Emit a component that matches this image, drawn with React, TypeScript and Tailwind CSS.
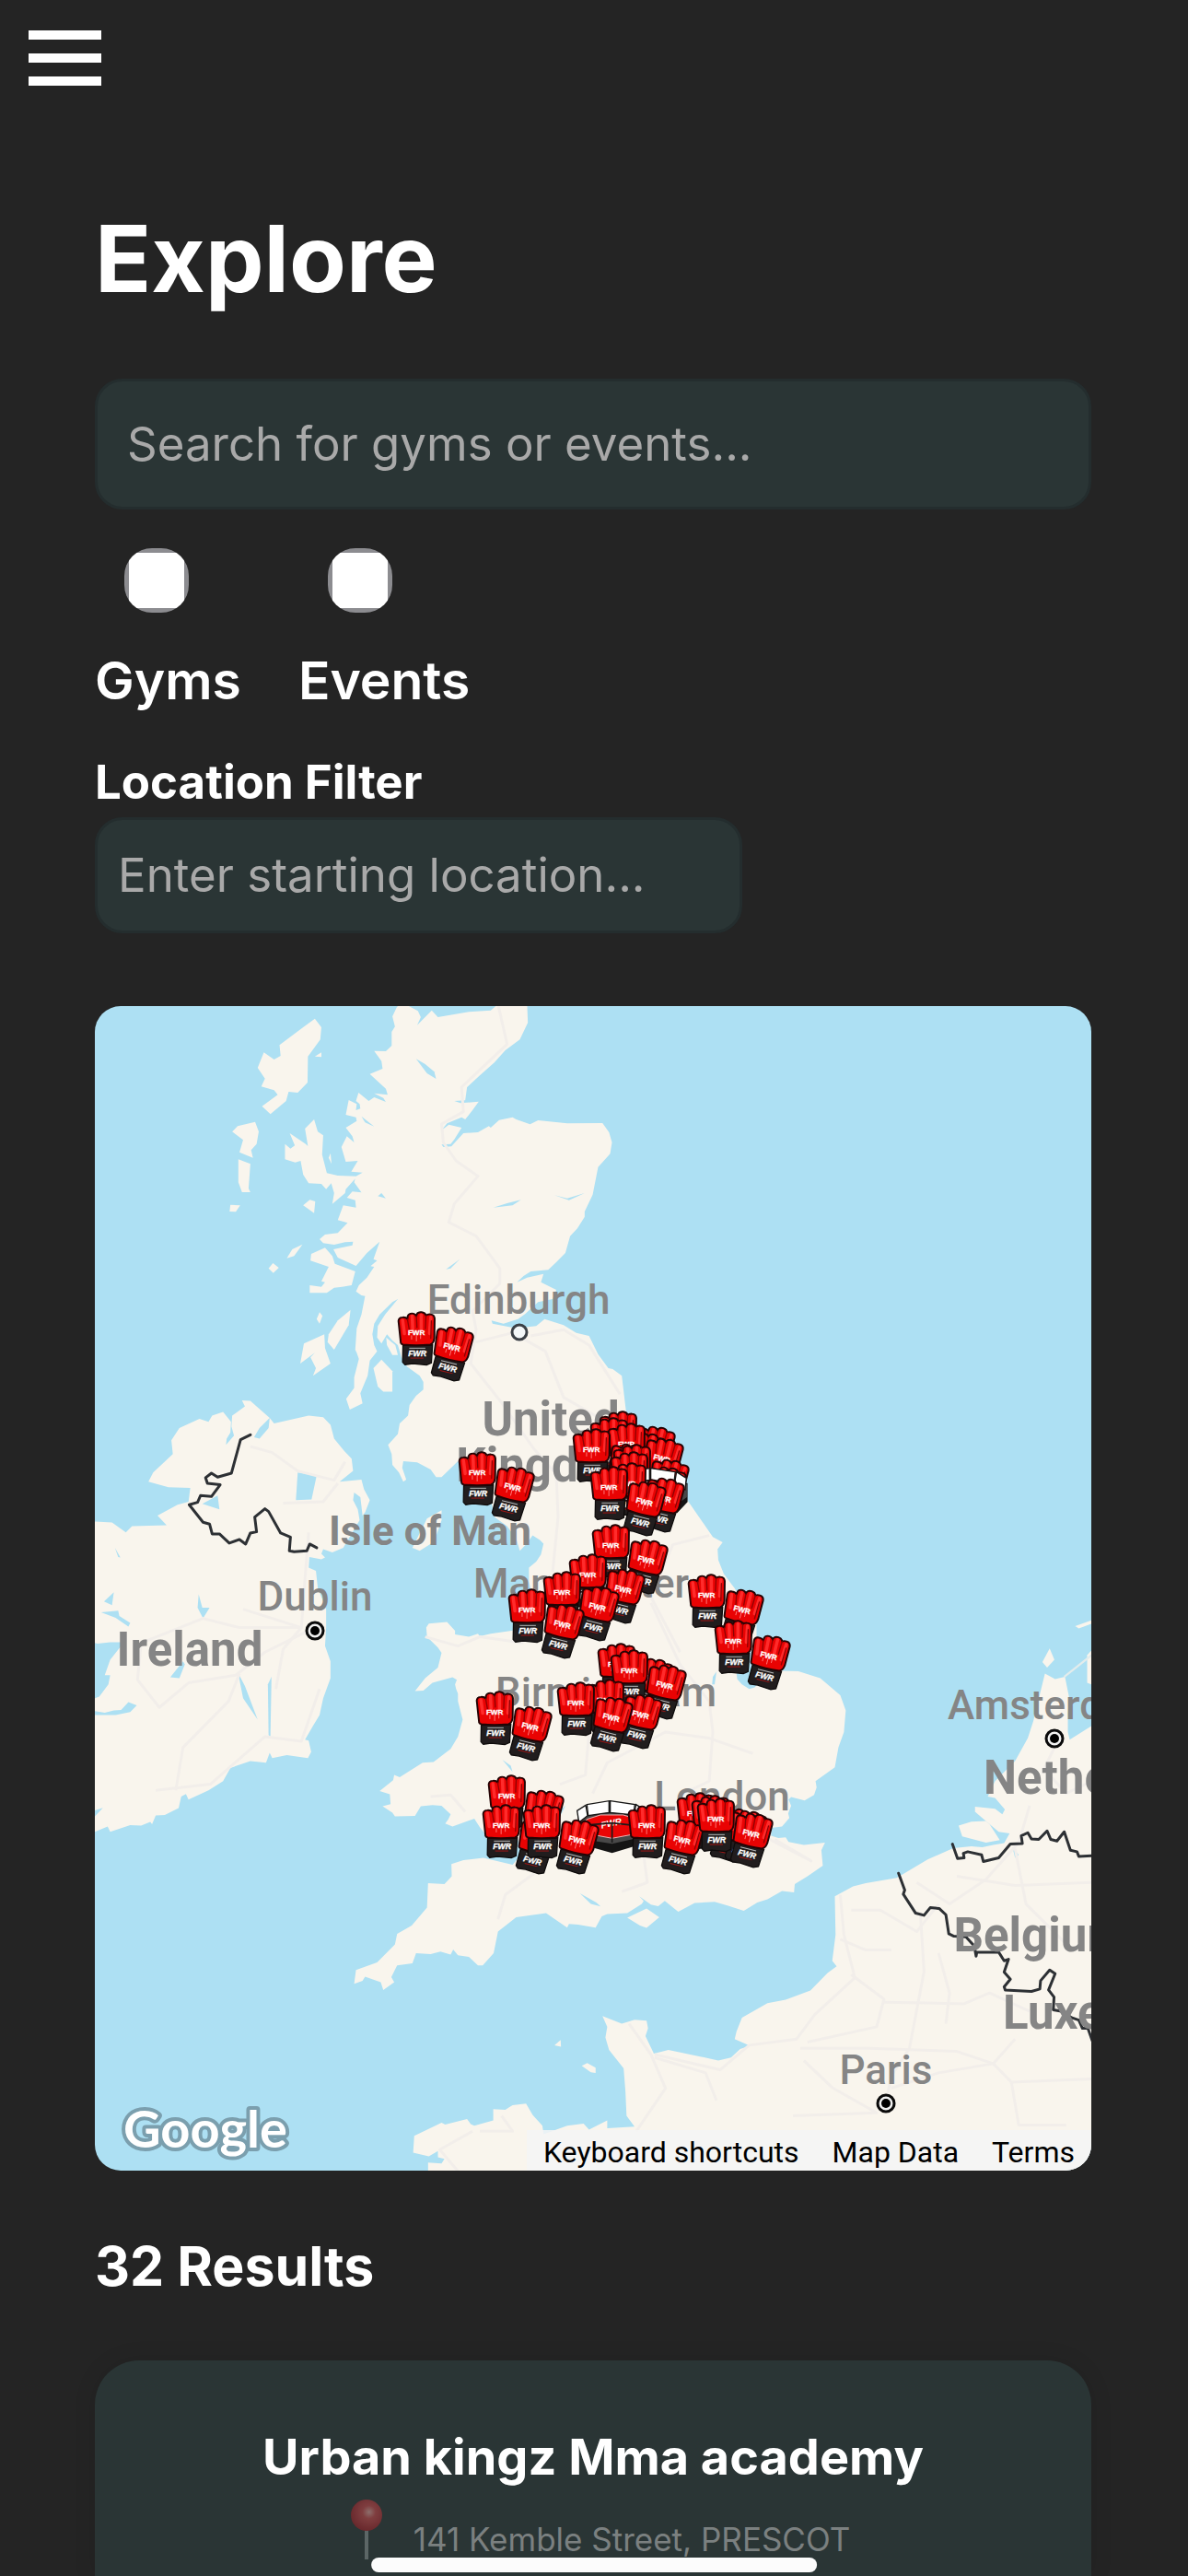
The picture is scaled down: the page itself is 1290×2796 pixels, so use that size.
import React from "react";

const filters = [
	{ id: "gyms", label: "Gyms" },
	{ id: "events", label: "Events" },
];

const mapLinks = ["Map Data", "Terms"];

// Land outlines, drawn on a 2769 x 3828 sheet
const land = [
	// Great Britain
	"870,30 895,36 920,52 928,72 918,98 958,50 975,72 1060,55 1120,50 1140,30 1220,30 1222,90 1200,145 1160,180 1130,220 1090,262 1055,300 1050,343 1020,345 1037,352 1087,347 1070,375 1050,405 1040,398 1000,418 985,440 1005,422 1040,432 1020,470 1010,485 985,487 990,495 1012,493 1045,450 1085,447 1115,427 1120,432 1143,407 1180,398 1190,405 1228,421 1250,408 1330,418 1427,417 1445,447 1453,480 1448,517 1415,560 1400,650 1378,705 1378,722 1358,760 1338,785 1325,840 1300,870 1278,895 1230,900 1210,915 1192,935 1220,920 1265,908 1258,935 1300,960 1290,990 1250,1000 1215,1038 1195,1055 1155,1070 1122,1060 1125,1070 1190,1085 1245,1078 1268,1055 1320,1075 1355,1100 1390,1110 1415,1170 1443,1215 1455,1218 1480,1240 1490,1340 1500,1440 1580,1560 1660,1645 1730,1765 1757,1782 1743,1805 1745,1840 1760,1885 1790,1932 1850,2050 1850,2110 1810,2180 1795,2210 1797,2228 1810,2245 1830,2260 1845,2255 1870,2220 1890,2200 1965,2202 2025,2225 2080,2280 2095,2330 2090,2400 2075,2450 2065,2515 2012,2560 2015,2580 2008,2605 1982,2623 1965,2618 1945,2612 1938,2620 1945,2640 1937,2665 1940,2680 1920,2708 1890,2712 1890,2738 1910,2745 1930,2743 1938,2758 1980,2768 2038,2760 2028,2785 2032,2835 1990,2870 1955,2895 1953,2922 1920,2918 1880,2945 1852,2955 1815,2982 1770,2965 1735,2953 1680,2957 1635,2985 1598,2950 1580,2967 1560,2962 1528,2935 1540,2950 1535,2960 1495,2990 1440,2993 1425,3000 1408,3037 1360,3027 1335,3025 1330,3037 1272,2990 1190,3003 1140,3050 1128,3120 1098,3160 1085,3160 1060,3132 1030,3127 1017,3108 1010,3125 982,3115 955,3123 915,3120 905,3153 863,3160 847,3198 855,3215 825,3240 818,3215 775,3197 768,3210 745,3220 750,3175 808,3150 857,3092 863,3057 903,3030 945,2972 948,2892 993,2895 1013,2870 1012,2830 1045,2817 1100,2810 1180,2832 1210,2790 1190,2740 1110,2740 1090,2710 1075,2682 1015,2708 995,2698 1003,2685 1010,2668 985,2640 960,2638 928,2642 912,2673 857,2675 850,2663 823,2642 845,2635 843,2603 815,2592 852,2557 855,2540 870,2547 933,2500 963,2498 1010,2455 1030,2415 1043,2360 1030,2300 1030,2275 1025,2260 1022,2245 1027,2230 1015,2222 960,2240 935,2265 912,2267 940,2225 975,2190 985,2142 975,2125 945,2090 943,2060 950,2047 1000,2042 1022,2070 1022,2082 1060,2090 1085,2080 1090,2088 1120,2080 1190,2068 1240,1990 1225,1910 1225,1865 1245,1845 1258,1822 1265,1787 1255,1775 1235,1760 1220,1785 1200,1810 1190,1770 1165,1730 1130,1700 1120,1640 1115,1560 1110,1510 1135,1495 1180,1472 1130,1500 1100,1505 1060,1520 1035,1525 1030,1518 985,1570 970,1570 955,1545 918,1522 880,1518 877,1540 888,1578 880,1585 868,1555 850,1530 848,1495 838,1465 865,1430 870,1395 893,1370 897,1335 915,1305 935,1285 935,1260 925,1240 890,1210 875,1180 865,1140 850,1125 835,1105 820,1135 808,1115 810,1078 830,1040 865,990 850,1000 815,1040 800,1070 795,1105 800,1140 808,1160 788,1190 782,1240 768,1280 762,1297 768,1330 733,1350 723,1315 745,1280 745,1245 758,1185 752,1165 748,1155 752,1085 765,1040 775,980 765,978 750,965 758,945 780,920 800,885 790,883 808,865 798,860 815,803 780,840 750,882 700,855 688,828 740,815 742,803 720,805 690,813 660,808 650,795 665,780 700,775 727,742 700,733 715,685 750,692 748,668 725,660 740,640 765,643 745,610 748,598 722,632 720,645 685,680 690,645 682,613 668,632 655,615 620,613 605,585 598,540 583,545 555,535 555,485 570,500 582,490 568,450 612,485 618,492 610,435 635,405 645,445 660,457 657,520 670,580 700,588 750,590 768,578 737,575 755,540 722,543 710,495 725,460 745,480 740,460 722,432 752,410 750,398 722,390 730,342 752,355 750,375 762,370 760,355 750,345 757,318 785,345 800,333 832,348 825,335 800,320 837,325 832,305 788,257 823,240 820,215 800,182 832,183 848,165 848,120 857,103 850,70 862,40",
	// Hebrides and the Clyde islands
	"637,77 655,105 652,145 618,200 617,285 590,318 565,315 558,345 515,388 492,362 535,325 525,310 490,298 500,272 480,237 497,187 525,210 543,198 540,163 605,105",
	"655,187 637,200 655,202",
	"473,413 483,445 477,485 462,505 467,530 430,512 440,472 410,445 425,427",
	"427,535 460,550 455,630 460,642 437,642 427,610",
	"405,683 432,685 420,706 403,705",
	"605,685 623,667 638,672 635,710",
	"680,515 683,550 675,530",
	"603,812 580,850 560,857 575,828",
	"522,873 538,888 523,905 510,890",
	"627,843 665,823 685,850 692,875 748,900 738,945 712,950 690,953 670,970 623,970 623,945 655,950 665,935 655,932 675,885 625,865",
	"735,1025 730,1075 690,1155 672,1130 675,1105 700,1060",
	"663,1105 665,1150 680,1200 632,1240 640,1215 625,1180 637,1165 597,1200 607,1135",
	"650,1033 658,1045 650,1070 642,1055",
	"820,1187 850,1225 850,1292 825,1292 810,1275 798,1215",
	"833,1115 858,1140 865,1172 850,1172 835,1140",
	// Isle of Man
	"985,1678 985,1710 965,1780 925,1810 905,1800 945,1705",
	// Ireland
	"437,1320 460,1322 513,1377 525,1395 620,1370 660,1375 680,1400 690,1445 718,1485 738,1510 742,1550 705,1585 765,1578 772,1610 788,1645 775,1685 765,1700 768,1695 762,1635 745,1620 742,1645 755,1675 760,1710 715,1800 685,1815 660,1805 655,1820 665,1832 655,1838 622,1830 620,1865 640,1875 645,1930 668,2000 668,2060 665,2120 680,2170 680,2225 660,2290 650,2345 632,2380 610,2425 620,2428 627,2465 618,2485 560,2475 520,2485 513,2468 503,2500 460,2495 405,2517 385,2560 345,2590 290,2620 283,2602 270,2610 263,2648 225,2670 200,2672 190,2700 185,2693 160,2705 130,2703 75,2725 68,2708 33,2725 0,2730 0,1715 33,1715 80,1718 118,1750 135,1730 230,1727 205,1695 260,1660 290,1650 295,1605 235,1603 180,1585 193,1555 247,1495 243,1450 265,1410 320,1380 345,1390 355,1370 385,1358 407,1390 405,1425 395,1445 393,1465 415,1435 408,1405 410,1370 445,1340",
	// Channel islands and the Isle of Wight
	"1295,3420 1312,3403 1313,3425",
	"1370,3487 1385,3478 1408,3493 1408,3510 1395,3508",
	"1495,3005 1548,2975 1583,3003 1548,3038 1530,3030",
	// France, Belgium and the Netherlands
	"948,3840 948,3802 985,3805 993,3790 975,3785 975,3765 950,3782 907,3770 910,3715 985,3672 995,3678 1055,3660 1065,3677 1075,3682 1127,3665 1127,3628 1160,3630 1180,3615 1217,3610 1235,3647 1262,3682 1265,3710 1330,3682 1375,3675 1390,3695 1440,3665 1440,3690 1515,3685 1493,3650 1490,3570 1485,3495 1445,3435 1435,3395 1440,3360 1427,3325 1480,3350 1515,3337 1548,3340 1552,3365 1545,3390 1565,3440 1568,3447 1608,3435 1680,3453 1745,3470 1780,3460 1805,3432 1832,3422 1790,3400 1795,3375 1810,3330 1880,3283 1930,3272 1998,3242 2045,3185 2070,3163 2058,3145 2067,3060 2065,2935 2115,2903 2150,2892 2235,2875 2320,2815 2390,2778 2440,2772 2470,2775 2500,2768 2530,2762 2545,2730 2515,2725 2485,2695 2450,2660 2450,2643 2505,2650 2525,2668 2532,2652 2505,2615 2485,2610 2505,2560 2560,2495 2595,2420 2610,2365 2642,2210 2670,2228 2697,2220 2708,2285 2705,2340 2705,2400 2710,2425 2770,2380 2790,2380 2790,3840",
	"2405,2705 2440,2692 2480,2690 2490,2700 2518,2752 2480,2760 2415,2740",
	"2655,2128 2668,2165 2648,2190 2635,2172",
	"2725,2055 2780,2032 2780,2043 2735,2063",
	"2780,2120 2758,2150 2758,2240 2780,2250",
];

// Lakes, lochs and inlets cut back out of the land
const water = [
	"915,208 940,225 965,250 970,273 945,255",
	"765,395 800,428 775,415",
	"810,655 820,645 832,662",
	"1127,692 1165,678 1203,667 1180,685",
	"1295,652 1330,662 1378,645 1335,668",
	"997,893 1035,860 1010,890",
	"1152,2490 1175,2510 1180,2530",
	"1730,2220 1740,2203 1735,2245 1728,2245",
	"1365,2925 1410,2955 1422,2968 1395,2960",
	"33,2110 40,2112 75,2108 113,2108 75,2165 60,2215 75,2215 70,2245 45,2285 33,2290",
	"33,2332 60,2337 85,2330 105,2328 125,2303 148,2313 130,2335 90,2345 33,2345",
	"33,2655 55,2647 33,2675",
	"88,1800 103,1832 97,1830",
	"85,1945 80,1987 58,1975",
	"50,2010 97,2005 100,2022 130,2045 125,2057 90,2028",
	"318,1952 328,1995 348,1995 330,2030 315,1995",
	"370,1630 375,1675 328,1657",
	"590,1555 642,1565 628,1643 585,1645",
	"425,2205 445,2250 480,2360 440,2290 430,2230",
	"508,2245 518,2220 515,2415 510,2410",
	"240,2222 275,2170 280,2180 265,2225",
	"513,1377 510,1410 485,1445 470,1440 485,1410",
	"1315,2650 1325,2640 1300,2700",
	"2553,2775 2570,2800 2560,2810",
];

const borders = [
	"460,1432 433,1448 408,1557 370,1570 353,1557 337,1572 342,1590 377,1595 353,1633 323,1630 315,1652 292,1660 330,1717 348,1723 355,1755 375,1755 402,1785 430,1773 447,1788 460,1752 477,1748 472,1700 500,1673 510,1682 543,1752 570,1765 567,1810 580,1813 615,1810 623,1788 642,1800",
	"2388,2765 2402,2812 2420,2810 2418,2795 2430,2790 2468,2800 2473,2822 2515,2810 2547,2765 2580,2763 2577,2738 2595,2728 2605,2748 2625,2750 2648,2722 2658,2750 2675,2755 2695,2725 2712,2785 2730,2790 2735,2805 2775,2803",
	"2240,2860 2257,2915 2253,2928 2287,2990 2310,2997 2327,2972 2352,2975 2370,2995 2378,3057 2392,3065 2425,3067 2448,3097 2453,3130 2455,3117 2515,3117 2530,3145 2542,3140 2530,3182 2547,3205 2530,3230 2533,3240 2605,3245 2628,3237 2630,3210 2655,3175 2670,3187 2652,3240 2667,3263 2665,3305 2690,3310 2715,3330 2735,3338 2745,3365 2760,3365 2772,3405",
];

const roads = [
	"1140,30 1165,160 1040,300 1045,380 985,420 990,480 1025,540 1085,590 1020,680 1005,740 1080,785 1145,890 1145,940 1070,1030 1080,1090 1065,1200 1145,1320 1240,1480 1300,1560 1305,1700 1290,1880",
	"1080,1130 1180,1100 1270,1160 1320,1310 1480,1420",
	"1230,1110 1320,1090 1390,1140 1475,1300",
	"460,1470 520,1490 590,1550 690,1580 720,1520",
	"550,1655 660,1650 700,1590",
	"620,1750 610,1900 600,2060 430,2060 330,2030 160,2110 150,2230 210,2320 290,2240 420,2215 500,2140 620,2070",
	"440,2000 600,2060 550,2130 530,2260",
	"200,2590 350,2570 500,2415 600,2430 650,2260",
	"255,2590 275,2450 400,2300 430,2210",
	"940,2090 1030,2120 1090,2090 1210,2110",
	"955,2610 1010,2605 1050,2660",
	"1310,2570 1380,2540 1390,2400",
	"1140,3010 1160,2930 1240,2860",
	"1560,1980 1640,2180 1720,2300 1730,2400 1720,2560 1650,2600",
	"1400,2600 1440,2500 1600,2400 1720,2420 1840,2470",
	"1720,1760 1620,1790 1560,1960 1640,2140",
	"1480,2920 1550,2890 1540,2800 1700,2780 1800,2720",
	"1900,2750 2000,2820 1870,2740 1760,2760",
	"2080,2930 2090,3060 2120,3200 2010,3320 1960,3400 1830,3420 1750,3500 1570,3450",
	"2110,3190 2200,3270 2180,3360 1990,3410",
	"2300,2990 2310,3180 2270,3430 2220,3520 2200,3640",
	"2350,3120 2380,3250 2370,3350",
	"2200,3280 2420,3285 2490,3250 2600,3310",
	"2290,2890 2380,2960 2480,2880 2570,2760 2600,2640",
	"2400,2870 2560,2900 2770,2890",
	"2560,2780 2590,2960 2700,3090",
	"1970,3430 2160,3430 2400,3440 2500,3480 2550,3540 2770,3530",
	"1980,3470 2060,3560 2180,3640 1950,3650",
	"2220,3560 2350,3510 2500,3480 2560,3400",
	"1500,3350 1560,3450 1600,3560 1520,3700",
	"1570,3460 1710,3510 1740,3600",
	"2550,3540 2570,3680 2700,3680",
	"2080,3075 2150,3110 2220,3110",
	"2110,2980 2190,2980 2290,3050 2350,2960",
	"2680,2420 2640,2520 2700,2600 2770,2560",
	"1070,3700 980,3760 1030,3830",
	"1150,3650 1180,3700 1090,3700",
];

const cities = [
	{ name: "Edinburgh", x: 460, y: 334 },
	{ name: "Dublin", x: 239, y: 656 },
	{ name: "Manchester", x: 528, y: 642 },
	{ name: "Birmingham", x: 555, y: 760 },
	{ name: "London", x: 681, y: 873 },
	{ name: "Amsterdam", x: 1041, y: 774 },
	{ name: "Paris", x: 859, y: 1170 },
];

const countries = [
	{ name: "United", x: 495, y: 466 },
	{ name: "Kingdom", x: 495, y: 516 },
	{ name: "Ireland", x: 103, y: 716 },
	{ name: "Netherlands", x: 1105, y: 855 },
	{ name: "Belgium", x: 1027, y: 1026 },
	{ name: "Luxembourg", x: 1129, y: 1110 },
];

const capitals = [
	{ x: 239, y: 678 },
	{ x: 1042, y: 795 },
	{ x: 859, y: 1191 },
];

const pins = [
	{ kind: "gym", x: 329, y: 332 },
	{ kind: "gym", x: 548, y: 440 },
	{ kind: "gym", x: 538, y: 447 },
	{ kind: "gym", x: 557, y: 453 },
	{ kind: "gym", x: 519, y: 459 },
	{ kind: "gym", x: 563, y: 476 },
	{ kind: "gym", x: 560, y: 484 },
	{ kind: "event", x: 567, y: 501 },
	{ kind: "gym", x: 558, y: 496 },
	{ kind: "gym", x: 538, y: 500 },
	{ kind: "gym", x: 395, y: 484 },
	{ kind: "gym", x: 540, y: 563 },
	{ kind: "gym", x: 515, y: 595 },
	{ kind: "gym", x: 487, y: 614 },
	{ kind: "gym", x: 449, y: 633 },
	{ kind: "gym", x: 644, y: 617 },
	{ kind: "gym", x: 673, y: 667 },
	{ kind: "gym", x: 546, y: 692 },
	{ kind: "gym", x: 560, y: 699 },
	{ kind: "gym", x: 534, y: 731 },
	{ kind: "gym", x: 502, y: 734 },
	{ kind: "gym", x: 414, y: 744 },
	{ kind: "gym", x: 427, y: 835 },
	{ kind: "gym", x: 632, y: 854 },
	{ kind: "gym", x: 648, y: 857 },
	{ kind: "event", x: 523, y: 862 },
	{ kind: "gym", x: 421, y: 867 },
	{ kind: "gym", x: 465, y: 867 },
	{ kind: "gym", x: 579, y: 867 },
	{ kind: "gym", x: 654, y: 860 },
];

const Glove = () => (
	<g>
		<path
			d="M17 112 L16 168 L24 176 L50 173 L96 177 L112 170 L116 110 Z"
			fill="#211d1e"
			stroke="#0d0b0b"
			strokeWidth="4"
		/>
		<path
			d="M10 104 L2 30 Q3 18 16 18 Q27 17 32 24 L33 14 Q36 5 47 5 Q58 5 62 14 L63 8 Q67 0 79 1 Q91 2 94 12 Q99 7 109 8 Q122 9 123 22 L122 88 Q119 106 108 109 Q60 114 18 109 Q11 108 10 104 Z"
			fill="#e90303"
			stroke="#240405"
			strokeWidth="6"
			strokeLinejoin="round"
		/>
		<path
			d="M16 28 L22 72 M48 14 L50 62 M78 10 L78 62 M110 18 L106 72"
			stroke="#ff2b2b"
			strokeWidth="11"
			strokeLinecap="round"
			fill="none"
		/>
		<path
			d="M32 24 L38 58 M62 14 L64 52 M94 12 L92 56 M112 30 L110 88"
			stroke="#8f0203"
			strokeWidth="4"
			strokeLinecap="round"
			fill="none"
		/>
		<path d="M46 78 V92 M62 78 V98 M76 78 V90" stroke="#ff7a7a" strokeWidth="3" />
		<text
			x="62"
			y="78"
			textAnchor="middle"
			fill="#fff"
			stroke="#fff"
			strokeWidth="1"
			className="font-['Liberation_Sans'] text-[25px] font-bold"
		>
			FWR
		</text>
		<path d="M38 121 H92" stroke="#b9b9b9" strokeWidth="3" />
		<text
			x="65"
			y="148"
			textAnchor="middle"
			fill="#fff"
			stroke="#fff"
			strokeWidth="1"
			className="font-['Liberation_Sans'] text-[27px] font-bold italic"
		>
			FWR
		</text>
		<path d="M42 154 H86" stroke="#a31515" strokeWidth="3" />
	</g>
);

const Gloves = () => (
	<g transform="scale(0.325)">
		<g transform="translate(176 136) rotate(14) translate(-62 -88)">
			<Glove />
		</g>
		<Glove />
	</g>
);

const Cage = () => (
	<g transform="scale(0.333)">
		<path d="M4 84 L38 128 L38 150 L116 172 L196 148 L230 112 L230 50 L116 40 Z" fill="#141414" />
		<path d="M4 54 L24 46 L112 34 L204 46 L228 54 L228 96 L186 126 L116 142 L40 130 L6 92 Z" fill="#484848" />
		<path d="M2 34 L30 16 L36 50 L8 72 Z" fill="#fff" stroke="#161616" strokeWidth="4" />
		<path d="M34 14 L106 2 V40 L38 50 Z" fill="#fff" stroke="#161616" strokeWidth="4" />
		<path d="M110 2 L190 14 L186 48 L110 40 Z" fill="#fff" stroke="#161616" strokeWidth="4" />
		<path d="M194 14 L226 34 L222 72 L188 50 Z" fill="#fff" stroke="#161616" strokeWidth="4" />
		<path
			d="M78 48 L152 48 L206 64 L214 90 L180 112 L116 124 L52 112 L22 88 L34 62 Z"
			fill="#ea0505"
			stroke="#f3b0b0"
			strokeWidth="3"
		/>
		<text
			transform="translate(82 92) rotate(-12)"
			fill="#fff"
			className="font-['Liberation_Sans'] text-[30px] font-bold italic"
		>
			FWR
		</text>
		<path d="M44 80 L116 74 L190 82 M116 76 V138" stroke="#1b1b1b" strokeWidth="5" fill="none" />
	</g>
);

const MapCanvas = () => (
	<svg
		viewBox="0 0 1082 1264"
		preserveAspectRatio="xMidYMid slice"
		className="block h-full w-full"
		role="img"
		aria-label="Map of gyms and events"
	>
		<g transform="translate(-13 -12) scale(0.3954 0.3333)">
			{land.map((points) => (
				<polygon key={points} points={points} fill="#f9f5ed" />
			))}
			{water.map((points) => (
				<polygon key={points} points={points} fill="#ade0f3" />
			))}
			<path d="M2695 2220 L2770 2150" stroke="#e3ecec" strokeWidth="6" />
			{roads.map((points) => (
				<polyline
					key={points}
					points={points}
					fill="none"
					stroke="#f2eeea"
					strokeWidth="3"
					strokeLinejoin="round"
					vectorEffect="non-scaling-stroke"
				/>
			))}
			{borders.map((points) => (
				<polyline
					key={points}
					points={points}
					fill="none"
					stroke="#2d3034"
					strokeWidth="3"
					strokeLinejoin="round"
					strokeLinecap="round"
					vectorEffect="non-scaling-stroke"
				/>
			))}
		</g>

		<g fill="#858585" textAnchor="middle" className="font-['Roboto',sans-serif]">
			{cities.map((city) => (
				<text key={city.name} x={city.x} y={city.y} className="text-[44px] font-medium">
					{city.name}
				</text>
			))}
			{countries.map((country) => (
				<text key={country.name} x={country.x} y={country.y} className="text-[51px] font-bold">
					{country.name}
				</text>
			))}
			<text x="364" y="585" className="text-[44px] font-bold">
				Isle of Man
			</text>
		</g>

		<circle cx="461" cy="354" r="8" fill="#f3f7f8" stroke="#3b4046" strokeWidth="3" />
		{capitals.map((c) => (
			<g key={c.x}>
				<circle cx={c.x} cy={c.y} r="9" fill="#f1f1f1" stroke="#0a0a0a" strokeWidth="3" />
				<circle cx={c.x} cy={c.y} r="5" fill="#000" />
			</g>
		))}

		{pins.map((pin) => (
			<g key={`${pin.x}-${pin.y}`} transform={`translate(${pin.x} ${pin.y})`}>
				{pin.kind === "gym" ? <Gloves /> : <Cage />}
			</g>
		))}

		<text
			x="31"
			y="1239"
			fill="#fff"
			stroke="#7b9fae"
			strokeWidth="8"
			strokeLinejoin="round"
			paintOrder="stroke"
			className="font-['Lato',sans-serif] text-[56px] font-bold"
		>
			Google
		</text>
	</svg>
);

const PushPin = () => (
	<svg viewBox="0 0 50 66" className="h-[66px] w-[50px] opacity-50">
		<defs>
			<radialGradient id="pin-head" cx="0.58" cy="0.4" r="0.6">
				<stop offset="0" stopColor="#f0a9a4" />
				<stop offset="0.35" stopColor="#d4474a" />
				<stop offset="1" stopColor="#a81f27" />
			</radialGradient>
		</defs>
		<rect x="31" y="34" width="4" height="32" fill="#8f9798" />
		<circle cx="33" cy="18" r="17" fill="url(#pin-head)" />
	</svg>
);

const App = () => {
	return (
		<div className="flex min-h-screen flex-col bg-[#242424] font-['Inter',sans-serif] text-white">
			<header className="flex px-[31px] pt-[33px]">
				<button type="button" aria-label="Open menu" className="flex flex-col gap-[15px]">
					<span className="h-[10px] w-[79px] bg-white" />
					<span className="h-[10px] w-[79px] bg-white" />
					<span className="h-[10px] w-[79px] bg-white" />
				</button>
			</header>

			<main className="flex flex-1 flex-col pt-[131px] pr-[105px] pl-[103px]">
				<h1 className="text-[101px] leading-[112px] font-bold">Explore</h1>

				<input
					type="text"
					aria-label="Search"
					placeholder="Search for gyms or events..."
					className="mt-[75px] w-full rounded-[30px] border-[3px] border-[#242d2e] bg-[#2a3535] px-8 py-[38px] text-[51px] leading-[60px] placeholder:text-[#a9a9a9]"
				/>

				<div className="mt-[42px] flex gap-[62px]">
					{filters.map((filter) => (
						<div key={filter.id} className="flex flex-col gap-10">
							<input
								type="checkbox"
								id={filter.id}
								className="ml-8 size-[70px] appearance-none rounded-[30px] bg-[#8c8c90] bg-[linear-gradient(white,white)] bg-[length:60px_60px] bg-center bg-no-repeat"
							/>
							<label htmlFor={filter.id} className="text-[57px] leading-[68px] font-semibold">
								{filter.label}
							</label>
						</div>
					))}
				</div>

				<label htmlFor="location" className="mt-[46px] text-[51px] leading-[60px] font-bold">
					Location Filter
				</label>
				<input
					type="text"
					id="location"
					placeholder="Enter starting location..."
					className="mt-2 w-[65%] rounded-[30px] border-[3px] border-[#242d2e] bg-[#2a3535] px-[22px] py-[30px] text-[51px] leading-[60px] placeholder:text-[#a9a9a9]"
				/>

				<section className="relative mt-[79px] aspect-[1082/1264] w-full overflow-hidden rounded-[28px] bg-[#ade0f3]">
					<MapCanvas />
					<div className="absolute right-0 bottom-0 flex gap-9 bg-[#f5f5f5]/85 pt-1 pr-[18px] pl-[18px] font-['Roboto',sans-serif] text-[32px] leading-10 text-black">
						<button type="button">Keyboard shortcuts</button>
						{mapLinks.map((link) => (
							<a key={link} href="#">
								{link}
							</a>
						))}
					</div>
				</section>

				<h2 className="mt-[68px] text-[59px] leading-[72px] font-bold">32 Results</h2>

				<article className="mt-[66px] flex flex-1 flex-col items-center rounded-t-[48px] bg-[#2a3535] pt-[73px] shadow-[0_0_24px_rgba(0,0,0,0.1)]">
					<h3 className="text-[54px] leading-[64px] font-bold">Urban kingz Mma academy</h3>
					<div className="mt-[13px] flex items-end gap-[34px]">
						<PushPin />
						<p className="text-[35px] leading-[44px] text-[#7b8080]">141 Kemble Street, PRESCOT</p>
					</div>
				</article>
			</main>

			{/* home indicator */}
			<div className="fixed bottom-1 left-1/2 h-4 w-[37.5%] -translate-x-1/2 rounded-full bg-[#fcfcfc]" />
		</div>
	);
};

export default App;
